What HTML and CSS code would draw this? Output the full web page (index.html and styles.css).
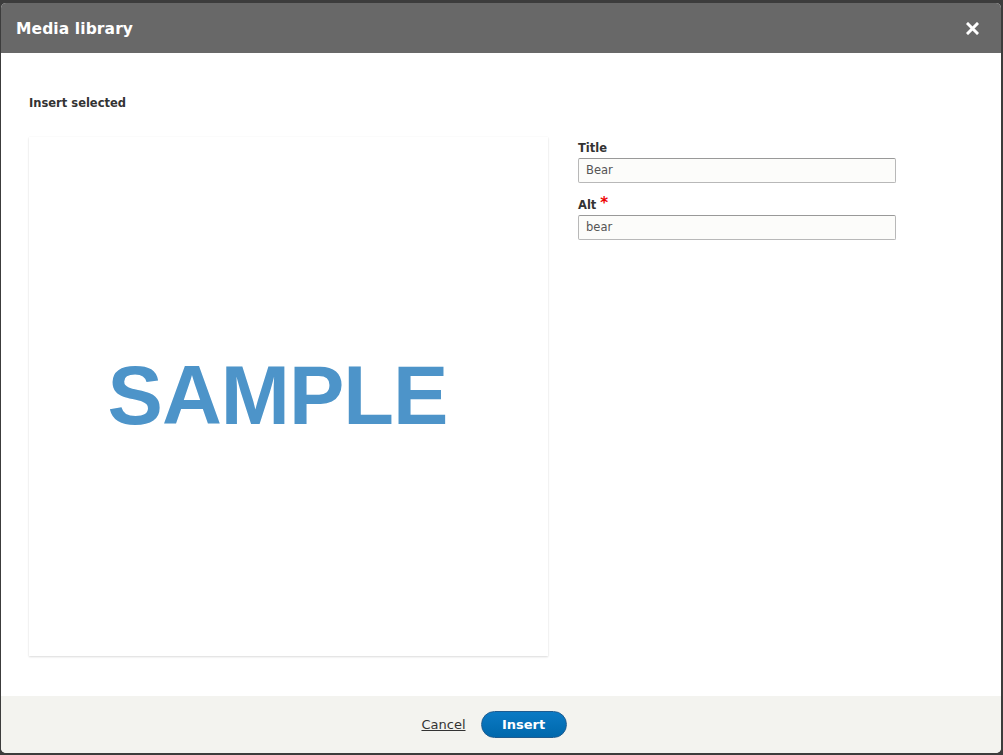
FILE: index.html
```html
<!DOCTYPE html>
<html>
<head>
<meta charset="utf-8">
<link rel="stylesheet" href="styles.css">
</head>
<body>
<div class="overlay">
  <div class="dialog">
    <div class="titlebar">
      <span class="title">Media library</span>
      <span class="close" aria-label="Close">
        <svg width="13" height="13" viewBox="0 0 13 13"><path d="M2 2 L11 11 M11 2 L2 11" stroke="#fff" stroke-width="3" stroke-linecap="square"/></svg>
      </span>
    </div>
    <div class="content">
      <h2 class="heading">Insert selected</h2>
      <div class="row">
        <div class="preview"><span class="sample">SAMPLE</span></div>
        <div class="fields">
          <label class="label">Title</label>
          <div class="input">Bear</div>
          <label class="label label-alt">Alt <span class="req">*</span></label>
          <div class="input">bear</div>
        </div>
      </div>
    </div>
    <div class="footer">
      <a class="cancel" href="#">Cancel</a>
      <span class="btn">Insert</span>
    </div>
  </div>
</div>
</body>
</html>
```

FILE: styles.css
```css
html, body {
  margin: 0;
  padding: 0;
  height: 100%;
}
body {
  background: #3c3c3c;
  font-family: "DejaVu Sans", "Lucida Grande", sans-serif;
  color: #333;
}
.overlay {
  padding: 3px 2px 2px 1px;
  height: 100%;
  box-sizing: border-box;
}
.dialog {
  height: 100%;
  background: #fff;
  border-radius: 5px;
  overflow: hidden;
  display: flex;
  flex-direction: column;
}
.titlebar {
  height: 50px;
  background: #686868;
  display: flex;
  align-items: center;
  justify-content: space-between;
  padding: 0 22px 0 15px;
  flex: none;
}
.title {
  color: #fff;
  font-weight: bold;
  font-size: 15.5px;
  letter-spacing: 0.1px;
  margin-top: 1px;
}
.close {
  display: flex;
  align-items: center;
  margin-top: 1px;
}
.content {
  flex: 1;
  padding: 41px 28px 0 28px;
}
.heading {
  margin: 0;
  font-size: 11.5px;
  font-weight: bold;
  color: #333;
  line-height: 18px;
}
.row {
  display: flex;
  margin-top: 25px;
}
.preview {
  width: 519px;
  height: 519px;
  background: #fff;
  box-shadow: 0 1px 2px rgba(0,0,0,0.14), 0 0 1px rgba(0,0,0,0.05);
  display: flex;
  align-items: center;
  justify-content: center;
  flex: none;
}
.sample {
  font-family: "Liberation Sans", Arial, sans-serif;
  font-weight: bold;
  font-size: 83px;
  letter-spacing: -1px;
  color: #4d94c9;
  filter: blur(0.7px);
  margin-top: -2px;
  margin-left: -22px;
}
.fields {
  margin-left: 30px;
  width: 318px;
  padding-top: 4px;
}
.label {
  display: block;
  font-size: 11.5px;
  font-weight: bold;
  color: #333;
  line-height: 14px;
  margin-bottom: 3px;
}
.label-alt {
  margin-top: 15px;
}
.req {
  color: #e00;
  font-size: 15px;
  line-height: 10px;
  position: relative;
  top: -1px;
}
.input {
  box-sizing: border-box;
  height: 25px;
  border: 1px solid #b8b8b8;
  border-top-color: #999;
  border-radius: 2px;
  background: #fcfcfa;
  font-size: 11.5px;
  line-height: 23px;
  padding: 0 7px;
  color: #555;
}
.footer {
  flex: none;
  height: 57px;
  background: #f3f3ef;
  display: flex;
  align-items: center;
  justify-content: center;
  gap: 15px;
  padding-right: 14px;
}
.cancel {
  color: #333;
  font-size: 13px;
  text-decoration: underline;
}
.btn {
  display: inline-block;
  height: 27px;
  line-height: 25px;
  border-radius: 14px;
  background: linear-gradient(#0b7ac4, #0068ac);
  border: 1px solid #1e5c90;
  color: #fff;
  font-weight: bold;
  font-size: 13px;
  box-sizing: border-box;
  width: 86px;
  text-align: center;
  padding: 0;
}
```
